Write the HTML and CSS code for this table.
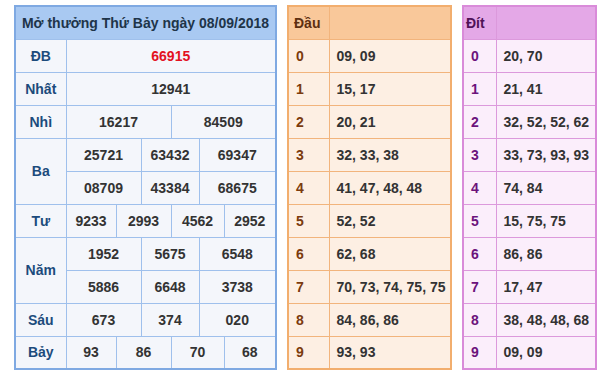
FILE: index.html
```html
<!doctype html>
<html>
  <head>
    <title>Kết quả xổ số</title>
    <link rel="stylesheet" href="styles.css">
  </head>
  <body>
    <div class="page">
      <table class="kq">
        <colgroup>
          <col style="width: 51px">
          <col style="width: 50px">
          <col style="width: 25px">
          <col style="width: 30px">
          <col style="width: 28px">
          <col style="width: 25px">
          <col>
        </colgroup>
        <tr class="kq-head">
          <th colspan="7">Mở thưởng Thứ Bảy ngày 08/09/2018</th>
        </tr>
        <tr>
          <td class="kq-label">ĐB</td>
          <td colspan="6" class="special">66915</td>
        </tr>
        <tr>
          <td class="kq-label">Nhất</td>
          <td colspan="6">12941</td>
        </tr>
        <tr>
          <td class="kq-label">Nhì</td>
          <td colspan="3">16217</td>
          <td colspan="3">84509</td>
        </tr>
        <tr>
          <td class="kq-label" rowspan="2">Ba</td>
          <td colspan="2">25721</td>
          <td colspan="2">63432</td>
          <td colspan="2">69347</td>
        </tr>
        <tr>
          <td colspan="2">08709</td>
          <td colspan="2">43384</td>
          <td colspan="2">68675</td>
        </tr>
        <tr>
          <td class="kq-label">Tư</td>
          <td>9233</td>
          <td colspan="2">2993</td>
          <td colspan="2">4562</td>
          <td>2952</td>
        </tr>
        <tr>
          <td class="kq-label" rowspan="2">Năm</td>
          <td colspan="2">1952</td>
          <td colspan="2">5675</td>
          <td colspan="2">6548</td>
        </tr>
        <tr>
          <td colspan="2">5886</td>
          <td colspan="2">6648</td>
          <td colspan="2">3738</td>
        </tr>
        <tr>
          <td class="kq-label">Sáu</td>
          <td colspan="2">673</td>
          <td colspan="2">374</td>
          <td colspan="2">020</td>
        </tr>
        <tr>
          <td class="kq-label">Bảy</td>
          <td>93</td>
          <td colspan="2">86</td>
          <td colspan="2">70</td>
          <td>68</td>
        </tr>
      </table>

      <table class="loto dau">
        <colgroup><col style="width: 41px"><col></colgroup>
        <tr class="loto-head"><th class="loto-key">Đầu</th><th></th></tr>
        <tr><td class="loto-key">0</td><td>09, 09</td></tr>
        <tr><td class="loto-key">1</td><td>15, 17</td></tr>
        <tr><td class="loto-key">2</td><td>20, 21</td></tr>
        <tr><td class="loto-key">3</td><td>32, 33, 38</td></tr>
        <tr><td class="loto-key">4</td><td>41, 47, 48, 48</td></tr>
        <tr><td class="loto-key">5</td><td>52, 52</td></tr>
        <tr><td class="loto-key">6</td><td>62, 68</td></tr>
        <tr><td class="loto-key">7</td><td>70, 73, 74, 75, 75</td></tr>
        <tr><td class="loto-key">8</td><td>84, 86, 86</td></tr>
        <tr><td class="loto-key">9</td><td>93, 93</td></tr>
      </table>

      <table class="loto dit">
        <colgroup><col style="width: 33px"><col></colgroup>
        <tr class="loto-head"><th class="loto-key">Đít</th><th></th></tr>
        <tr><td class="loto-key">0</td><td>20, 70</td></tr>
        <tr><td class="loto-key">1</td><td>21, 41</td></tr>
        <tr><td class="loto-key">2</td><td>32, 52, 52, 62</td></tr>
        <tr><td class="loto-key">3</td><td>33, 73, 93, 93</td></tr>
        <tr><td class="loto-key">4</td><td>74, 84</td></tr>
        <tr><td class="loto-key">5</td><td>15, 75, 75</td></tr>
        <tr><td class="loto-key">6</td><td>86, 86</td></tr>
        <tr><td class="loto-key">7</td><td>17, 47</td></tr>
        <tr><td class="loto-key">8</td><td>38, 48, 48, 68</td></tr>
        <tr><td class="loto-key">9</td><td>09, 09</td></tr>
      </table>
    </div>
  </body>
</html>
```

FILE: styles.css
```css
body {
  margin: 0;
  background: #fff;
  font-family: "Liberation Sans", Arial, sans-serif;
  font-size: 14px;
  font-weight: bold;
  color: #333;
}
.page {
  display: flex;
  align-items: flex-start;
  gap: 10px;
  padding: 5px 0 0 14px;
}
table {
  border-collapse: collapse;
  table-layout: fixed;
}
tr {
  height: 33px;
}
th, td {
  padding: 0;
  font-weight: bold;
}

/* bảng kết quả */
.kq {
  width: 263px;
  border: 2px solid #7fa9e2;
  background: #f4f6fb;
}
.kq td {
  border: 1px solid #9fc0ec;
  text-align: center;
}
.kq-head th {
  background: #a9c9f2;
  color: #203449;
  border-bottom: 1px solid #9fc0ec;
  white-space: nowrap;
}
.kq-label {
  color: #1c4b7c;
}
.special {
  color: #e3111f;
}

/* bảng lô tô */
.loto {
  border-width: 2px;
  border-style: solid;
}
.loto td, .loto th {
  border-width: 1px;
  border-style: solid;
  text-align: left;
  padding-left: 7px;
  white-space: nowrap;
}
.loto-head th.loto-key {
  padding-left: 5px;
}
.dau {
  width: 165px;
  border-color: #f2ae6e;
  background: #fdefe3;
}
.dau td, .dau th {
  border-color: #f2b47c;
}
.dau .loto-head th {
  background: #f9c89a;
  color: #5e2f10;
}
.dau td.loto-key {
  color: #7b3b0e;
}
.dit {
  width: 135px;
  border-color: #d98bd9;
  background: #fbeefb;
}
.dit td, .dit th {
  border-color: #dc99dc;
}
.dit .loto-head th {
  background: #e4a8e7;
  color: #4f1257;
}
.dit .loto-head th.loto-key {
  padding-left: 2px;
}
.dit td.loto-key {
  color: #6c137c;
}
```
